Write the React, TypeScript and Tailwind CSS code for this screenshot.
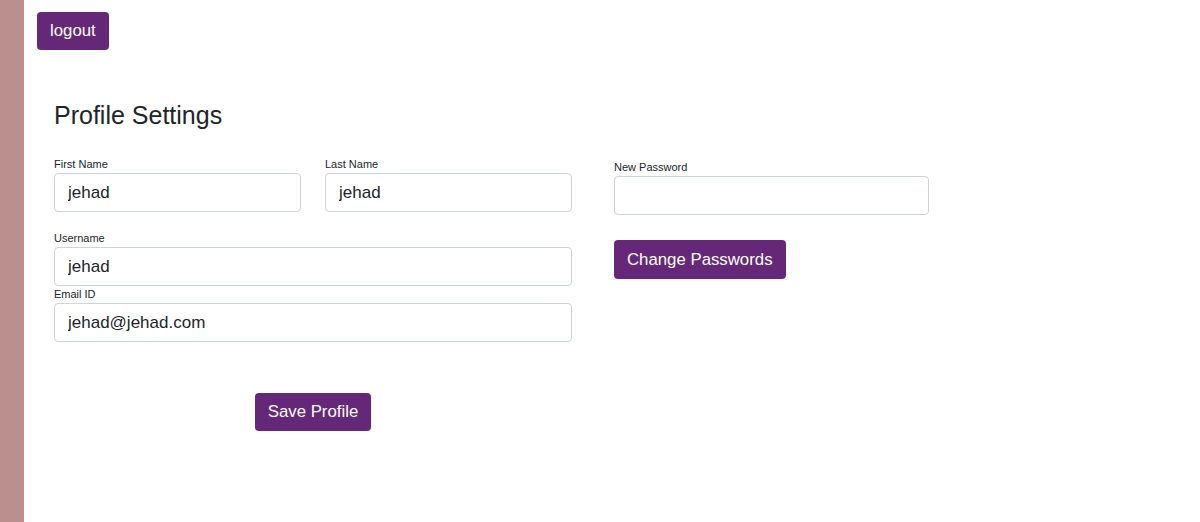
import { useState } from "react";

function Field({
  label,
  value,
  type = "text",
  className = "",
}: {
  label: string;
  value: string;
  type?: string;
  className?: string;
}) {
  const [v, setV] = useState(value);
  return (
    <div className={`flex flex-col ${className}`}>
      <label className="mb-[2px] text-[11px] leading-[13px] text-[#212529]">{label}</label>
      <input
        type={type}
        value={v}
        onChange={(e) => setV(e.target.value)}
        className="h-[39px] w-full rounded-[4px] border border-[#ced4da] bg-white px-[13px] text-[17px] text-[#212529] outline-none"
      />
    </div>
  );
}

export default function App() {
  return (
    <div className="flex min-h-[522px] bg-white font-['Liberation_Sans',Arial,sans-serif]">
      <aside className="w-6 shrink-0 bg-[#bc8f8f]" />
      <main className="flex-1 pl-[13px] pt-3">
        <button className="h-[38px] rounded-[4px] bg-[#652878] px-[13px] text-[16.8px] text-white">
          logout
        </button>

        <div className="pl-[17px] pt-[50px]">
          <h3 className="text-[25px] leading-[31px] text-[#212529]">Profile Settings</h3>

          <div className="mt-[27px] flex gap-[42px]">
            <div className="flex w-[518px] flex-col">
              <div className="flex gap-[24px]">
                <Field label="First Name" value="jehad" className="flex-1" />
                <Field label="Last Name" value="jehad" className="flex-1" />
              </div>
              <Field label="Username" value="jehad" className="mt-[20px]" />
              <Field label="Email ID" value="jehad@jehad.com" className="mt-[2px]" />
              <div className="mt-[51px] flex justify-center">
                <button className="h-[38px] rounded-[4px] bg-[#652878] px-[13px] text-[16.8px] text-white">
                  Save Profile
                </button>
              </div>
            </div>

            <div className="flex w-[315px] flex-col items-start pt-[3px]">
              <Field label="New Password" value="" type="password" className="w-full" />
              <button className="mt-[25px] h-[39px] rounded-[4px] bg-[#652878] px-[13px] text-[16.8px] text-white">
                Change Passwords
              </button>
            </div>
          </div>
        </div>
      </main>
    </div>
  );
}
